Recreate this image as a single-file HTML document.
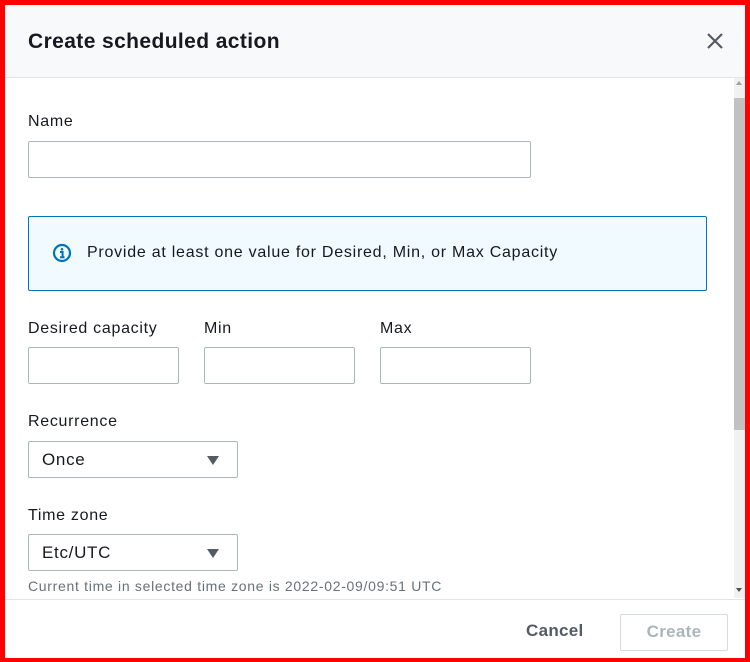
<!DOCTYPE html>
<html><head><meta charset="utf-8"><style>
*{box-sizing:border-box;margin:0;padding:0}
body{width:750px;height:662px;overflow:hidden;background:#f00;font-family:"Liberation Sans","DejaVu Sans",sans-serif;color:#16191f;position:relative;letter-spacing:0.7px}
.modal{position:absolute;left:5px;top:5px;width:740px;height:653px;background:#fff;overflow:hidden}
.hdr{position:absolute;left:0;top:0;width:740px;height:73px;background:#f8f9fa;border-bottom:1px solid #e2e4e6}
.title{position:absolute;left:23px;top:25px;font-size:21px;font-weight:bold;letter-spacing:0.4px}
.x{position:absolute;left:700px;top:26px}
.a{position:absolute}
.lbl{font-size:16px;color:#16191f}
.inp{border:1px solid #aab7b8;border-radius:2px;background:#fff}
.alert{position:absolute;left:23px;top:211px;width:679px;height:75px;background:#f1faff;border:1px solid #0073bb;border-radius:2px}
.sel{font-size:17px;padding:9px 0 0 13px}
.tri{position:absolute;right:18px;top:14px;width:0;height:0;border-left:6px solid transparent;border-right:6px solid transparent;border-top:9px solid #545b64}
.sb{position:absolute;left:729px;top:73px;width:11px;height:520px;background:#f1f1f1}
.thumb{position:absolute;left:729px;top:93px;width:11px;height:332px;background:#c1c1c1}
.ftr{position:absolute;left:0;top:594px;width:740px;height:59px;border-top:1px solid #e2e4e6;background:#fff}
</style></head><body>
<div class="modal">
<div class="hdr"><div class="title">Create scheduled action</div>
<svg class="x" width="20" height="20" viewBox="0 0 20 20"><path d="M3 3L17 17M17 3L3 17" stroke="#545b64" stroke-width="2.2"/></svg></div>
<div class="a lbl" style="left:23px;top:108px">Name</div>
<div class="a inp" style="left:23px;top:136px;width:503px;height:37px"></div>
<div class="alert">
<svg class="a" style="left:23px;top:26px" width="20" height="20" viewBox="0 0 20 20"><circle cx="10" cy="10" r="8" fill="none" stroke="#0073bb" stroke-width="2.2"/><circle cx="10" cy="6.3" r="1.3" fill="#0073bb"/><path d="M8 9h2.6v5M8 14.3h4.5" stroke="#0073bb" stroke-width="2" fill="none"/></svg>
<div class="a" style="left:58px;top:27px;font-size:16px;white-space:nowrap;letter-spacing:0.75px">Provide at least one value for Desired, Min, or Max Capacity</div></div>
<div class="a lbl" style="left:23px;top:315px">Desired capacity</div>
<div class="a lbl" style="left:199px;top:315px">Min</div>
<div class="a lbl" style="left:375px;top:315px">Max</div>
<div class="a inp" style="left:23px;top:342px;width:151px;height:37px"></div>
<div class="a inp" style="left:199px;top:342px;width:151px;height:37px"></div>
<div class="a inp" style="left:375px;top:342px;width:151px;height:37px"></div>
<div class="a lbl" style="left:23px;top:408px">Recurrence</div>
<div class="a inp sel" style="left:23px;top:436px;width:210px;height:37px;padding-top:8px">Once<div class="tri"></div></div>
<div class="a lbl" style="left:23px;top:502px">Time zone</div>
<div class="a inp sel" style="left:23px;top:529px;width:210px;height:37px;padding-top:8px">Etc/UTC<div class="tri"></div></div>
<div class="a" style="left:23px;top:573px;font-size:14px;color:#687078;white-space:nowrap;letter-spacing:0.7px">Current time in selected time zone is 2022-02-09/09:51 UTC</div>
<div class="sb"></div><div class="thumb"></div>
<div class="a" style="left:731px;top:76px;border-left:3px solid transparent;border-right:3px solid transparent;border-bottom:4px solid #a0a0a0"></div>
<div class="a" style="left:731px;top:583px;border-left:3px solid transparent;border-right:3px solid transparent;border-top:4px solid #505050"></div>
<div class="ftr">
<div class="a" style="left:521px;top:21px;font-size:17px;font-weight:bold;color:#545b64;letter-spacing:0.3px">Cancel</div>
<div class="a" style="left:615px;top:14px;width:108px;height:37px;border:1px solid #d5dbdb;border-radius:2px;text-align:center;padding-top:7px;font-size:17px;font-weight:bold;color:#aab7b8;letter-spacing:0.3px">Create</div>
</div>
</div>
</body></html>
